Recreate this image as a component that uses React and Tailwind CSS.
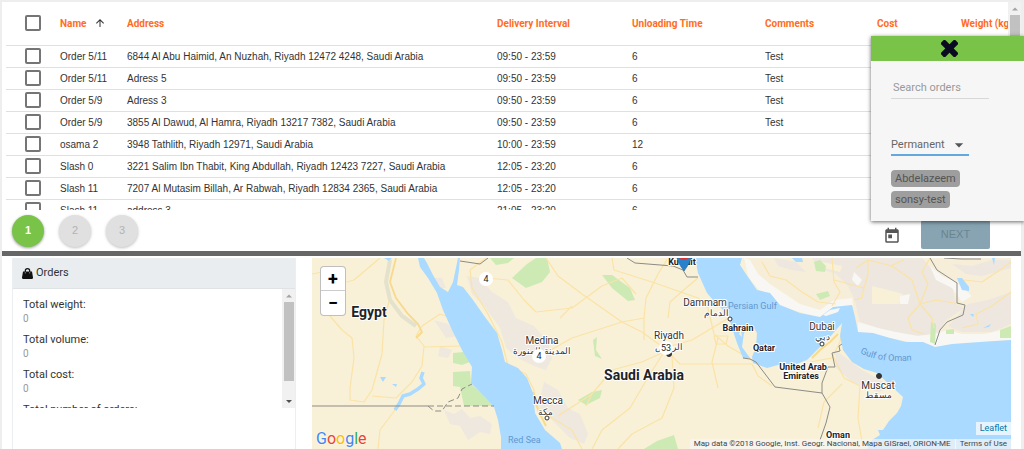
import { useState } from "react";
import { MdArrowUpward, MdArrowDropDown, MdToday } from "react-icons/md";

const orders = [
  { id: 1, name: "Order 5/11", address: "6844 Al Abu Haimid, An Nuzhah, Riyadh 12472 4248, Saudi Arabia", interval: "09:50 - 23:59", unloading: 6, comments: "Test" },
  { id: 2, name: "Order 5/11", address: "Adress 5", interval: "09:50 - 23:59", unloading: 6, comments: "Test" },
  { id: 3, name: "Order 5/9", address: "Adress 3", interval: "09:50 - 23:59", unloading: 6, comments: "Test" },
  { id: 4, name: "Order 5/9", address: "3855 Al Dawud, Al Hamra, Riyadh 13217 7382, Saudi Arabia", interval: "09:50 - 23:59", unloading: 6, comments: "Test" },
  { id: 5, name: "osama 2", address: "3948 Tathlith, Riyadh 12971, Saudi Arabia", interval: "10:00 - 23:59", unloading: 12, comments: "" },
  { id: 6, name: "Slash 0", address: "3221 Salim Ibn Thabit, King Abdullah, Riyadh 12423 7227, Saudi Arabia", interval: "12:05 - 23:20", unloading: 6, comments: "" },
  { id: 7, name: "Slash 11", address: "7207 Al Mutasim Billah, Ar Rabwah, Riyadh 12834 2365, Saudi Arabia", interval: "12:05 - 23:20", unloading: 6, comments: "" },
  { id: 8, name: "Slash 11", address: "address 3", interval: "21:05 - 23:20", unloading: 6, comments: "" },
];

const totals = [
  { label: "Total weight:", value: 0 },
  { label: "Total volume:", value: 0 },
  { label: "Total cost:", value: 0 },
  { label: "Total number of orders:", value: 0 },
];

function Checkbox({ label, checked, onChange }) {
  return (
    <input
      type="checkbox"
      aria-label={label}
      checked={checked}
      onChange={onChange}
      className="block size-4 appearance-none rounded-xs border-2 border-[#757575] bg-white checked:bg-[#78c348]"
    />
  );
}

function OrdersTable() {
  const [selected, setSelected] = useState([]);

  const toggle = (id) =>
    setSelected(selected.includes(id) ? selected.filter((s) => s !== id) : [...selected, id]);

  const toggleAll = () =>
    setSelected(selected.length === orders.length ? [] : orders.map((o) => o.id));

  return (
    <div className="flex h-[208px] pl-1">
      <div className="min-w-0 flex-1 overflow-hidden">
        <table className="w-full table-fixed border-collapse whitespace-nowrap text-left text-[10px] text-[#333]">
          <colgroup>
            <col className="w-[54px]" />
            <col className="w-[67px]" />
            <col />
            <col className="w-[135px]" />
            <col className="w-[133px]" />
            <col className="w-[112px]" />
            <col className="w-[84px]" />
            <col className="w-[47px]" />
          </colgroup>
          <thead className="font-['Roboto','Noto_Sans',sans-serif] text-[#ff6d1f]">
            <tr className="h-[43px] border-b border-[#e0e0e0]">
              <th className="pl-[19px]">
                <Checkbox
                  label="Select all orders"
                  checked={selected.length === orders.length}
                  onChange={toggleAll}
                />
              </th>
              <th>
                <span className="flex items-center gap-2">
                  Name
                  <MdArrowUpward className="size-3 shrink-0 text-[#333]" />
                </span>
              </th>
              <th>Address</th>
              <th>Delivery Interval</th>
              <th>Unloading Time</th>
              <th>Comments</th>
              <th>Cost</th>
              <th>Weight (kg)</th>
            </tr>
          </thead>
          <tbody>
            {orders.map((order) => (
              <tr key={order.id} className="h-[22px] border-b border-[#e0e0e0]">
                <td className="pl-[19px]">
                  <Checkbox
                    label={`Select ${order.name}`}
                    checked={selected.includes(order.id)}
                    onChange={() => toggle(order.id)}
                  />
                </td>
                <td>{order.name}</td>
                <td>{order.address}</td>
                <td>{order.interval}</td>
                <td>{order.unloading}</td>
                <td>{order.comments}</td>
                <td></td>
                <td></td>
              </tr>
            ))}
          </tbody>
        </table>
      </div>
      {/* Scrollbar */}
      <div className="flex w-[13px] flex-col items-center bg-[#f1f1f1]">
        <svg viewBox="0 0 12 13" className="h-[13px] w-3" fill="#a3a3a3">
          <path d="M3 8.500 6 5.500 9 8.500z" />
        </svg>
        <div className="h-10 w-[10px] bg-[#c1c1c1]" />
      </div>
    </div>
  );
}

function SearchPanel() {
  return (
    <aside className="absolute right-0 top-9 z-10 w-[153px] bg-[#f6f6f6] pb-[13px] shadow-[0_1px_4px_rgba(0,0,0,0.6)]">
      <button type="button" aria-label="Close" className="flex h-[25px] w-full items-center justify-center bg-[#78c348] pl-1">
        <svg viewBox="0 0 16 16" className="size-[17px]" fill="#0a0a20">
          <rect x="-1.500" y="5.200" width="19" height="5.600" rx="1.400" transform="rotate(45 8 8)" />
          <rect x="-1.500" y="5.200" width="19" height="5.600" rx="1.400" transform="rotate(-45 8 8)" />
        </svg>
      </button>
      <div className="flex flex-col items-start pl-5 pt-4">
        <input
          type="text"
          aria-label="Search orders"
          placeholder="Search orders"
          className="h-[22px] w-[98px] border-b border-[#d8d8d8] px-[2px] text-[11px] text-[#444] outline-none placeholder:text-[#999]"
        />
        <div className="relative mt-9 w-[78px]">
          <select
            aria-label="Order type"
            className="block h-[21px] w-full appearance-none border-b-2 border-[#64a8e0] pt-[2px] text-[11px] text-[#666] outline-none"
          >
            <option>Permanent</option>
          </select>
          <MdArrowDropDown className="pointer-events-none absolute right-0 top-0 size-5 text-[#555]" />
        </div>
        <ul className="mt-[14px] flex flex-col items-start gap-1 text-[11px] leading-[17px] text-[#555]">
          <li className="rounded-sm bg-[#9e9e9e] px-1">Abdelazeem</li>
          <li className="rounded-sm bg-[#9e9e9e] px-1">sonsy-test</li>
        </ul>
      </div>
    </aside>
  );
}

function StepBar() {
  return (
    <div className="flex h-[41px] items-center justify-between pl-[10px] pr-[31px]">
      <div className="flex gap-[15px] text-[11px]">
        <button type="button" className="size-8 rounded-full bg-[#78c348] font-bold text-white shadow-[0_1px_3px_rgba(0,0,0,0.4)]">
          1
        </button>
        <button type="button" className="size-8 rounded-full bg-[#e0e0e0] text-[#b3b3b3] shadow-[0_1px_3px_rgba(0,0,0,0.25)]">
          2
        </button>
        <button type="button" className="size-8 rounded-full bg-[#e0e0e0] text-[#b3b3b3] shadow-[0_1px_3px_rgba(0,0,0,0.25)]">
          3
        </button>
      </div>
      <div className="flex items-end gap-5 self-end pb-[2px]">
        <button type="button" aria-label="Pick a date" className="pb-1">
          <MdToday className="size-[18px] text-[#555]" />
        </button>
        <button type="button" className="h-[29px] w-[69px] rounded-xs bg-[#88a4b2] text-[11px] text-[#698491]">
          NEXT
        </button>
      </div>
    </div>
  );
}

function TotalsCard() {
  return (
    <section className="w-[284px] shrink-0 border-x border-[#eceff1] bg-white">
      <h2 className="flex h-[31px] items-center gap-[3px] border-b border-[#dfe3e6] bg-[#e9edf0] px-[9px] text-[11px] text-[#333]">
        <svg viewBox="0 0 11 11" className="size-[11px]">
          <path d="M1 3.500h9l1 6q0 1.500-1.200 1.500H1.200Q0 11 0 9.500z" fill="#111" />
          <path d="M3.300 5V2.800a2.200 2.200 0 0 1 4.400 0V5" fill="none" stroke="#111" strokeWidth="1.200" />
          <path d="M3.300 4v1.500M7.700 4v1.500" stroke="#aaa" strokeWidth="0.700" />
        </svg>
        Orders
      </h2>
      <div className="flex h-[119px]">
        <dl className="flex-1 overflow-hidden pl-[10px] pt-2">
          {totals.map((total) => (
            <div key={total.label} className="pb-[7px]">
              <dt className="text-[11px] leading-4 text-[#333]">{total.label}</dt>
              <dd className="text-[10px] leading-3 text-[#999]">{total.value}</dd>
            </div>
          ))}
        </dl>
        {/* Scrollbar */}
        <div className="flex w-[13px] flex-col items-center bg-[#f1f1f1]">
          <svg viewBox="0 0 12 13" className="h-[13px] w-3" fill="#a3a3a3">
            <path d="M3 8.500 6 5.500 9 8.500z" />
          </svg>
          <div className="h-[79px] w-[10px] bg-[#c1c1c1]" />
          <svg viewBox="0 0 12 13" className="mt-auto h-[13px] w-3" fill="#505050">
            <path d="M3 5 6 8 9 5z" />
          </svg>
        </div>
      </div>
    </section>
  );
}

function Cluster({ x, y, r = 7, count }) {
  return (
    <g>
      <circle cx={x} cy={y} r={r} fill="#fff" />
      <text x={x} y={y + 3} fontSize="9" fill="#222" textAnchor="middle">
        {count}
      </text>
    </g>
  );
}

function MapDrawing() {
  return (
    <svg viewBox="0 0 699 191" preserveAspectRatio="xMinYMin slice" className="absolute inset-0 size-full">
      <rect width="699" height="191" fill="#f8f1d7" />

      {/* Mountain and desert shading */}
      <g fill="#efe8df">
        <path d="M155 18 168 20 180 34 196 44 204 60 222 68 236 84 240 100 234 112 222 108 206 100 194 90 188 70 172 48 160 36z" />
        <path d="M122 62 136 66 146 78 134 80zM128 88 140 92 136 100 126 98z" />
        <path d="M132 152 142 156 150 151 158 160 168 158 180 166 178 176 168 174 156 182 148 168 138 166z" />
        <path d="M232 124 246 132 256 150 268 156 276 176 272 186 258 180 244 166 226 148z" />
        <path d="M121 20 130 20 134 30 128 30z" />
        <path d="M523 92 534 100 550 112 565 120 580 130 566 134 540 124 524 110z" />
      </g>

      {/* Iran and Pakistan */}
      <path d="M430 0H699V82L668 84 623 89 578 80 546 74 540 47 508 59 468 47 445 32z" fill="#f6eed8" />
      <g fill="#ede7df">
        <path d="M500 0H610L622 14 640 28 644 46 652 50 634 62 626 76 600 78 566 70 548 64 542 40 536 28 524 16 506 10z" />
        <path d="M656 46 676 42 699 34 699 66 680 74 650 74 636 68 644 60z" />
        <path d="M640 6 660 8 680 2 699 2 699 10 670 18 654 16z" />
        <path d="M462 0 484 4 494 14 480 12 466 8z" />
      </g>
      <g fill="#f8f1d7">
        <path d="M560 28 576 32 591 36 587 46 560 46z" />
        <path d="M510 4 530 8 528 14 512 10z" />
      </g>
      <g fill="#f8f7f4">
        <path d="M432 0 438 2 446 16 458 26 470 34 488 46 508 52 522 42 540 40 541 48 522 51 508 60 468 48 446 31 436 18z" />
        <path d="M546 64 566 70 584 74 606 78 622 76 636 72 650 76 672 76 699 70 699 82 668 84 623 89 578 80 546 74z" />
        <path d="M618 8 630 18 644 24 660 38 650 44 640 30 624 22zM588 38 598 36 596 46 588 46zM542 14 550 22 546 28 540 22z" />
      </g>

      {/* Parks */}
      <g fill="#cdeab4">
        <path d="M200 20 215 6 224 0 235 0 238 14 230 24 214 30z" />
        <path d="M178 0 202 0 196 5 184 7z" />
        <path d="M290 17 300 17 318 30 323 42 316 43 300 30z" />
        <path d="M281 82 285 79 284 92 290 101 283 98z" />
        <path d="M266 142 280 134 290 132 288 140 274 147z" />
        <path d="M332 191 345 183 362 177 366 191z" />
        <path d="M141 95 152 94 158 104 150 107 141 105z" />
        <path d="M141 114 158 113 159 126 173 138 182 148 152 148 148 129 141 128z" />
        <path d="M502 4 508 2 514 8 513 14 504 13zM504 36 516 33 518 38 508 42z" />
        <path d="M619 64 624 66 623 86 618 84zM634 72 642 71 642 76 634 76zM688 72 699 68 699 80 688 80z" />
      </g>

      {/* Roads */}
      <g fill="none" stroke="#fbe3a6" strokeWidth="1.200" strokeLinejoin="round">
        <path d="M68 0 42 22 20 28 18 58 30 72 40 80 42 100 38 130 38 142 52 144 60 132 70 96 72 62 78 40" />
        <path d="M60 138 84 140 100 124 110 108 112 88 104 78 110 68 128 56 134 58" />
        <path d="M112 89 150 88M83 152 68 172 66 191M0 16 10 14" />
        <path d="M174 0 158 12 160 30 176 56 190 84 196 108 214 116 222 132 224 148 240 160 260 172 270 191" />
        <path d="M174 20 196 22 212 42 224 54 260 50 290 28 310 20 324 36" />
        <path d="M234 0 246 18 270 36 310 64 330 74 352 90 380 82 420 58" />
        <path d="M228 98 260 80 310 64 332 60 334 40 346 16 356 0" />
        <path d="M300 0 302 12 340 24 386 40 396 50 402 76 416 88 440 102 470 106" />
        <path d="M356 60 358 44 374 30 386 20" />
        <path d="M352 94 330 104 300 112 280 136 246 158" />
        <path d="M352 94 338 116 318 150 290 172 280 191" />
        <path d="M360 98 362 130 350 160 320 176 306 191" />
        <path d="M358 96 368 106 440 106 446 118 460 128" />
        <path d="M406 80 400 104 406 130M402 78 416 78 414 86 404 86z" />
        <path d="M248 60 260 48M332 60 332 82M280 136 274 148" />
        <path d="M498 104 520 100 528 84 530 70M520 96 532 120 548 128 546 160 550 184M530 126 512 144 506 170" />
        <path d="M450 4 458 18 474 22 490 34 506 44 524 46" />
        <path d="M520 0 522 24 528 34 520 48M522 22 552 30 556 16 556 2 580 8 600 22 608 46" />
        <path d="M608 46 596 60 600 72 612 76M608 46 620 60 622 70M608 46 624 42 648 46" />
        <path d="M618 0 610 14 616 26 608 46M556 2 544 10M552 30 550 40 542 42M578 8 592 2" />
        <path d="M650 70 666 66 664 56 680 48 699 34M652 22 670 24 688 12 699 4" />
      </g>
      <g fill="none" stroke="#f9d98b" strokeWidth="1.800">
        <path d="M84 0 78 24 84 40 96 56 106 66 110 74 104 80" />
        <path d="M500 100 508 92 518 84 526 76" />
        <path d="M221 134 226 152 234 168" />
      </g>
      <path d="M78 2 74 24 78 42 90 58 104 68" fill="none" stroke="#e4e2cc" strokeWidth="4" />

      {/* Seas */}
      <g fill="#aadaff">
        <path d="M106 0 108 9 116 20 125 35 131 52 140 72 150 92 160 109 159 125 173 139 182 149 186 162 189 179 189 191H250L248 185 233 172 223 155 221 135 215 120 206 110 193 104 190 92 185 75 173 59 161 42 151 29 145 27 147 12 148 0H146L141 24 136 34 128 29 121 17 115 5 112 0z" />
        <path d="M383 0 386 15 395 35 401 42 416 57 420 70 425 85 431 100 438 100 430 89 432 75 440 67 445 75 444 89 440 99 441 105 455 110 466 107 482 107 495 102 505 92 518 79 530 65 528 78 531 92 540 104 552 111 565 115 578 127 591 139 589 148 585 155 577 163 571 172 566 172 568 177 560 182 555 191H699V82L668 84 640 86 623 89 611 84 594 84 578 80 561 75 546 74 543 59 540 47 521 49 508 59 488 55 468 47 458 35 445 32 436 19 428 7 430 0z" />
        <path d="M645 20 650 20 657 29 657 33 650 32zM680 0 683 0 682 7zM480 0 490 0 491 4 484 4z" />
        <path d="M72 0 80 0 77 3zM658 56 662 56 661 59zM671 70 679 66 677 69z" />
        <path d="M68 119 74 119 71 124zM80 126 85 126 84 129z" />
      </g>
      <path d="M511 57 518 52 528 50 526 54 514 58z" fill="#f8f7f4" />
      <path d="M111 114 109 120 112 126 106 131 98 136 91 138 87 146 83 152" fill="none" stroke="#aadaff" strokeWidth="3.500" strokeLinejoin="round" />
      <path d="M429 72 430 79 427 76z" fill="#f8f1d7" />

      {/* Borders */}
      <g fill="none" stroke="#8d8b86" strokeWidth="1">
        <path d="M0 148H116" />
        <path d="M116 148H182M116 148 122 153 130 153 136 144 146 140 150 131 160 126" strokeDasharray="6 3" />
        <path d="M148 3 168 6 176 0M315 0 323 5 361 8 371 12 375 19 386 19" />
        <path d="M431 100 438 101 444 104 463 129 510 135 518 149 514 165 508 182" />
        <path d="M510 135 510 125 516 109 523 109 520 95 528 93 527 88 530 86" />
        <path d="M618 0 625 12 645 25 645 45 653 47 651 57 635 64 628 72 623 87M632 0 650 1 669 1" />
      </g>

      {/* Place names */}
      <g fill="#1f2328" fontWeight="700" fontSize="9" stroke="#fff" strokeWidth="2" strokeLinejoin="round" paintOrder="stroke" textAnchor="middle">
        <text x="57" y="59" fontSize="14">Egypt</text>
        <text x="332" y="122" fontSize="14">Saudi Arabia</text>
        <text x="370" y="7">Kuwait</text>
        <text x="426" y="73">Bahrain</text>
        <text x="452" y="93">Qatar</text>
        <text x="491" y="112">United Arab</text>
        <text x="489" y="121">Emirates</text>
        <text x="526" y="180">Oman</text>
      </g>
      <g fill="#333" fontSize="10" stroke="#fff" strokeWidth="2" strokeLinejoin="round" paintOrder="stroke" textAnchor="middle">
        <text x="230" y="86">Medina</text>
        <text x="230" y="96" fontSize="9">المدينة المنورة</text>
        <text x="236" y="146">Mecca</text>
        <text x="233" y="157" fontSize="9">مكة</text>
        <text x="357" y="81">Riyadh</text>
        <text x="357" y="92" fontSize="9">الرياض</text>
        <text x="393" y="48">Dammam</text>
        <text x="404" y="58" fontSize="9">الدمام</text>
        <text x="510" y="72">Dubai</text>
        <text x="510" y="82" fontSize="9">دبي</text>
        <text x="566" y="131">Muscat</text>
        <text x="566" y="140" fontSize="9">مسقط</text>
      </g>
      <g fill="#fff" stroke="#333">
        <circle cx="235" cy="160" r="2" />
        <circle cx="418" cy="61" r="2" />
        <circle cx="510" cy="86" r="2" />
        <circle cx="567" cy="118" r="2.500" fill="#333" />
        <circle cx="357" cy="96" r="2.500" fill="#333" />
      </g>
      <g fill="#6397cf" fontSize="9">
        <path id="gulf-of-oman" d="M548 95Q570 106 604 102" fill="none" />
        <text x="416" y="51">Persian Gulf</text>
        <text x="196" y="185">Red Sea</text>
        <text>
          <textPath href="#gulf-of-oman">Gulf of Oman</textPath>
        </text>
      </g>

      {/* Order markers */}
      <Cluster x={174} y={21} count={4} />
      <Cluster x={227} y={98} count={4} />
      <Cluster x={354} y={90} count={53} />
      <path d="M365 0H379Q378 5 372 13 366 5 365 0z" fill="#2a81cb" stroke="#1d5f99" strokeWidth="0.600" />
      <path d="M367 0H377Q372 4 367 0z" fill="#d33" />
    </svg>
  );
}

function OrdersMap() {
  return (
    <section aria-label="Map" className="relative min-w-0 flex-1 overflow-hidden bg-[#aadaff]">
      <MapDrawing />
      <div className="absolute left-2 top-2 flex w-[26px] flex-col rounded border border-black/25 bg-white text-[18px] font-bold text-black">
        <button type="button" aria-label="Zoom in" className="h-6 border-b border-[#ccc] leading-none">
          +
        </button>
        <button type="button" aria-label="Zoom out" className="h-6 leading-none">
          −
        </button>
      </div>
      <a href="#google" className="absolute bottom-0 left-1 text-[16px] leading-5 [text-shadow:0_0_2px_#fff]">
        <span className="text-[#4285f4]">G</span>
        <span className="text-[#ea4335]">o</span>
        <span className="text-[#fbbc05]">o</span>
        <span className="text-[#4285f4]">g</span>
        <span className="text-[#34a853]">l</span>
        <span className="text-[#ea4335]">e</span>
      </a>
      <div className="absolute bottom-0 right-0 flex flex-col items-end">
        <a href="#leaflet" className="mb-1 bg-white/70 px-1 text-[9px] leading-[13px] text-[#0078a8]">
          Leaflet
        </a>
        <div className="flex bg-[#f5f5f5]/70 text-[8px] leading-[10px] text-[#444]">
          <span className="px-1">Map data ©2018 Google, Inst. Geogr. Nacional, Mapa GISrael, ORION-ME</span>
          <a href="#terms" className="border-l border-white/60 px-1">
            Terms of Use
          </a>
        </div>
      </div>
    </section>
  );
}

export default function App() {
  return (
    <div className="relative min-h-screen bg-[#eeeeee] pl-[2px] pr-[3px] pt-[2px] font-['Roboto','Noto_Sans',sans-serif]">
      <SearchPanel />
      <main className="flex min-h-[447px] flex-col bg-white">
        <div className="font-['Liberation_Sans',Arial,sans-serif]">
          <OrdersTable />
          <StepBar />
        </div>
        <div className="h-[5px] bg-[#666]" />
        <div className="flex flex-1 gap-4 pl-[10px] pr-[10px] pt-[2px]">
          <TotalsCard />
          <OrdersMap />
        </div>
      </main>
    </div>
  );
}
